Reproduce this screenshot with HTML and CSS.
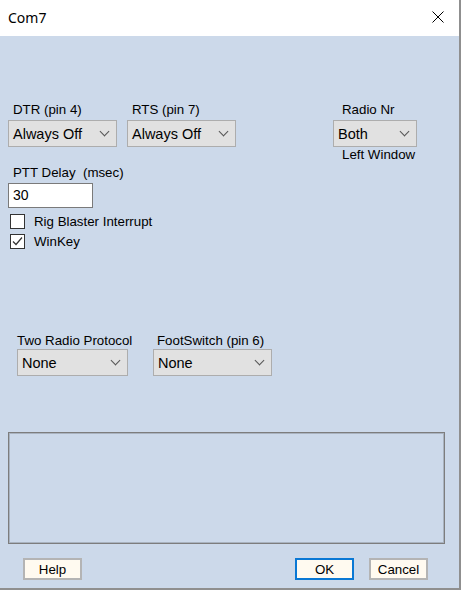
FILE: index.html
```html
<!DOCTYPE html>
<html lang="en">
<head>
    <meta charset="UTF-8">
    <title>Com7</title>
    <link rel="stylesheet" href="styles.css">
</head>
<body>
    <div class="window">
        <div class="titlebar">
            <span class="title">Com7</span>
            <svg class="close" width="12" height="12" viewBox="0 0 12 12">
                <path d="M0.5 0.5 L11.5 11.5 M11.5 0.5 L0.5 11.5" stroke="#000" stroke-width="1" fill="none"/>
            </svg>
        </div>

        <div class="panel">
            <div class="row-top">
                <div class="field field-dtr">
                    <div class="label">DTR (pin 4)</div>
                    <div class="combo"><span>Always Off</span><i class="chev"></i></div>
                </div>
                <div class="field field-rts">
                    <div class="label">RTS (pin 7)</div>
                    <div class="combo"><span>Always Off</span><i class="chev"></i></div>
                </div>
                <div class="field field-radio">
                    <div class="label">Radio Nr</div>
                    <div class="combo"><span>Both</span><i class="chev"></i></div>
                    <div class="label sub">Left Window</div>
                </div>
            </div>

            <div class="ptt">
                <div class="label">PTT Delay&nbsp; (msec)</div>
                <div class="textbox">30</div>
            </div>

            <div class="checks">
                <div class="check"><span class="box"></span>Rig Blaster Interrupt</div>
                <div class="check"><span class="box checked">
                    <svg width="13" height="13" viewBox="0 0 13 13"><path d="M2 6.5 L5 9.5 L11 2.5" stroke="#333" stroke-width="1.2" fill="none"/></svg>
                </span>WinKey</div>
            </div>

            <div class="row-bottom">
                <div class="field field-two">
                    <div class="label">Two Radio Protocol</div>
                    <div class="combo"><span>None</span><i class="chev"></i></div>
                </div>
                <div class="field field-foot">
                    <div class="label">FootSwitch (pin 6)</div>
                    <div class="combo"><span>None</span><i class="chev"></i></div>
                </div>
            </div>

            <div class="messages"></div>

            <div class="buttons">
                <button class="btn">Help</button>
                <button class="btn btn-ok">OK</button>
                <button class="btn">Cancel</button>
            </div>
        </div>
    </div>
</body>
</html>
```

FILE: styles.css
```css
body {
    margin: 0;
    background-color: #ffffff;
    font-family: "Liberation Sans", Arial, sans-serif;
    color: #000;
}
.window {
    width: 459px;
    height: 588px;
    border-right: 2px solid #8f8f8f;
    border-bottom: 2px solid #8f8f8f;
    display: flex;
    flex-direction: column;
}
.titlebar {
    height: 36px;
    display: flex;
    align-items: center;
    justify-content: space-between;
    padding: 0 15px 0 8px;
    background-color: #fff;
    flex-shrink: 0;
}
.title {
    font-family: "Noto Sans", sans-serif;
    font-size: 14px;
    margin-top: -1px;
}
.close {
    margin-top: -2px;
}
.panel {
    flex: 1;
    background-color: #ccd9ea;
    padding-top: 66px;
}
.label {
    font-size: 13.3px;
    line-height: 15px;
    margin-bottom: 3px;
    white-space: nowrap;
}
.combo {
    height: 27px;
    box-sizing: border-box;
    border: 1px solid #adadad;
    background-color: #e1e1e1;
    display: flex;
    align-items: center;
    justify-content: space-between;
    padding: 0 6px 0 4px;
    font-size: 14.5px;
}
.combo span {
    margin-top: 1px;
}
.chev {
    width: 6px;
    height: 6px;
    border-right: 1px solid #555;
    border-bottom: 1px solid #555;
    transform: rotate(45deg);
    margin: -4px 2px 0 0;
}
.row-top {
    display: flex;
    align-items: flex-start;
    margin-left: 8px;
}
.field-dtr, .field-rts {
    width: 109px;
}
.field-dtr .label, .field-rts .label {
    padding-left: 5px;
}
.field-rts {
    margin-left: 10px;
}
.field-radio {
    width: 84px;
    margin-left: 97px;
}
.field-radio .label {
    padding-left: 9px;
}
.field-radio .label.sub {
    margin: 0;
}
.ptt {
    margin: 3px 0 0 8px;
}
.ptt .label {
    padding-left: 5px;
}
.textbox {
    width: 85px;
    height: 25px;
    box-sizing: border-box;
    border: 1px solid #7a7a7a;
    background-color: #fff;
    font-size: 14px;
    line-height: 23px;
    padding-left: 4px;
}
.checks {
    margin: 3px 0 0 10px;
}
.check {
    height: 20px;
    display: flex;
    align-items: center;
    font-size: 13.3px;
}
.box {
    width: 15px;
    height: 15px;
    box-sizing: border-box;
    border: 1px solid #333;
    background-color: #fff;
    margin-right: 9px;
    display: flex;
    align-items: center;
    justify-content: center;
}
.row-bottom {
    display: flex;
    margin: 82px 0 0 17px;
}
.row-bottom .label {
    margin-bottom: 1px;
}
.field-two {
    width: 111px;
}
.field-foot {
    width: 119px;
    margin-left: 25px;
}
.field-foot .label {
    padding-left: 4px;
}
.messages {
    width: 437px;
    height: 112px;
    box-sizing: border-box;
    margin: 56px 0 0 8px;
    border: 1px solid #7d7d7d;
    box-shadow: inset 0 0 0 1px #a9b3c0;
}
.buttons {
    display: flex;
    margin: 14px 31px 0 23px;
}
.btn {
    width: 59px;
    height: 22px;
    box-sizing: border-box;
    border: 2px solid #b4b4b4;
    background-color: #fffaf0;
    font-family: "Liberation Sans", Arial, sans-serif;
    font-size: 13.3px;
    padding: 0;
    color: #000;
}
.btn-ok {
    margin-left: auto;
    margin-right: 15px;
    border-color: #0a78d4;
}
```
